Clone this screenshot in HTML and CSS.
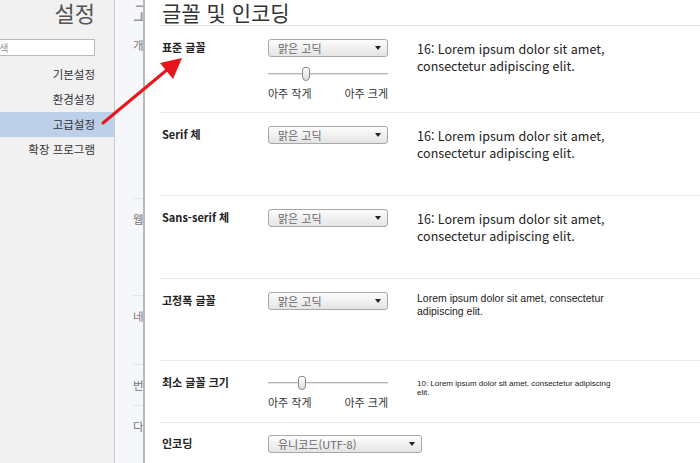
FILE: index.html
```html
<!DOCTYPE html>
<html lang="ko">
<head>
  <meta charset="UTF-8" />
  <meta name="viewport" content="width=device-width, initial-scale=1" />
  <title>설정 - 글꼴 및 인코딩</title>
  <link rel="stylesheet" href="styles.css">
</head>
<body>
  <div class="sidebar">
    <h1 class="side-title">설정</h1>
    <div class="search-wrap"><input class="search" type="text" placeholder="검색" /></div>
    <ul class="nav">
      <li>기본설정</li>
      <li>환경설정</li>
      <li class="active">고급설정</li>
      <li>확장 프로그램</li>
    </ul>
  </div>

  <div class="page">
    <div class="page-title">고급 설정</div>
    <div class="page-section s1">개인 정보</div>
    <div class="page-section s2">웹 콘텐츠</div>
    <div class="page-section s3">네트워크</div>
    <div class="page-section s4">번역</div>
    <div class="page-section s5">다운로드</div>

    <div class="overlay">
      <h2 class="overlay-title">글꼴 및 인코딩</h2>

      <div class="row r1">
        <div class="label">표준 글꼴</div>
        <div class="controls">
          <div class="select">맑은 고딕</div>
          <div class="slider"><span class="thumb" style="left: 34px"></span></div>
          <div class="slider-labels"><span>아주 작게</span><span>아주 크게</span></div>
        </div>
        <div class="sample sample-16">16: Lorem ipsum dolor sit amet, consectetur adipiscing elit.</div>
      </div>

      <div class="row">
        <div class="label">Serif 체</div>
        <div class="controls">
          <div class="select">맑은 고딕</div>
        </div>
        <div class="sample sample-16">16: Lorem ipsum dolor sit amet, consectetur adipiscing elit.</div>
      </div>

      <div class="row">
        <div class="label">Sans-serif 체</div>
        <div class="controls">
          <div class="select">맑은 고딕</div>
        </div>
        <div class="sample sample-16">16: Lorem ipsum dolor sit amet, consectetur adipiscing elit.</div>
      </div>

      <div class="row r4">
        <div class="label">고정폭 글꼴</div>
        <div class="controls">
          <div class="select">맑은 고딕</div>
        </div>
        <div class="sample sample-mono">Lorem ipsum dolor sit amet, consectetur adipiscing elit.</div>
      </div>

      <div class="row r5">
        <div class="label">최소 글꼴 크기</div>
        <div class="controls">
          <div class="slider slider-top"><span class="thumb" style="left: 30px"></span></div>
          <div class="slider-labels"><span>아주 작게</span><span>아주 크게</span></div>
        </div>
        <div class="sample sample-10">10: Lorem ipsum dolor sit amet, consectetur adipiscing elit.</div>
      </div>

      <div class="row r6">
        <div class="label">인코딩</div>
        <div class="controls">
          <div class="select select-wide">유니코드(UTF-8)</div>
        </div>
      </div>
    </div>
  </div>

  <svg class="arrow" width="700" height="463" viewBox="0 0 700 463">
    <line x1="103" y1="123" x2="168" y2="69" stroke="#e8161b" stroke-width="3" stroke-linecap="round" />
    <polygon points="182,58 160,63 173,79" fill="#e8161b" />
  </svg>
</body>
</html>
```

FILE: styles.css
```css
body {
  margin: 0;
  width: 700px;
  height: 463px;
  overflow: hidden;
  display: flex;
  font-family: "Noto Sans CJK KR", "Noto Sans", sans-serif;
  color: #333;
  position: relative;
}
.sidebar {
  width: 114px;
  flex-shrink: 0;
  background: #f1f1f1;
  border-right: 1px solid #c9cbcf;
}
.side-title {
  margin: 0;
  padding-right: 19px;
  text-align: right;
  font-size: 22px;
  line-height: 24px;
  font-weight: normal;
  color: #555;
}
.search-wrap {
  display: flex;
  justify-content: flex-end;
  padding-right: 19px;
  margin-top: 15px;
}
.search {
  width: 110px;
  flex-shrink: 0;
  height: 17px;
  box-sizing: border-box;
  border: 1px solid #b9b9b9;
  padding: 0 4px;
  font-family: inherit;
  font-size: 10px;
  background: #fff;
}
.search::placeholder { color: #999; }
.nav {
  list-style: none;
  margin: 6px 0 0;
  padding: 0;
}
.nav li {
  height: 25px;
  line-height: 25px;
  text-align: right;
  padding-right: 19px;
  font-size: 11.5px;
  color: #333;
}
.nav li.active { background: #bdd0ea; }

.page {
  flex: 1;
  position: relative;
  background: #f5f7fa;
  padding-left: 18px;
}
.page-title {
  font-size: 21px;
  line-height: 24px;
  height: 25px;
  color: #999;
  white-space: nowrap;
}
.page-section {
  font-size: 11.5px;
  color: #777;
  line-height: 14px;
  padding-top: 13px;
  box-sizing: border-box;
  border-top: 1px solid #e2e5ea;
  white-space: nowrap;
}
.s1 { height: 173px; border-top: none; }
.s2 { height: 97px; }
.s3 { height: 69px; }
.s4 { height: 41px; }
.s5 { height: 40px; }

.overlay {
  position: absolute;
  left: 28px;
  top: 0;
  right: 0;
  bottom: 0;
  background: #fff;
  border-left: 2px solid #b7b9bd;
  padding-left: 15px;
}
.overlay-title {
  margin: 0;
  padding-left: 2px;
  font-size: 21px;
  line-height: 24px;
  height: 25px;
  font-weight: normal;
  color: #333;
  border-bottom: 1px solid #e4e4e4;
}
.row {
  display: flex;
  height: 83px;
  box-sizing: border-box;
  padding: 13px 0 0 2px;
  border-bottom: 1px solid #ececec;
}
.r1 { height: 87px; }
.r4 { height: 82px; }
.r5 { height: 62px; }
.r6 { height: 40px; border-bottom: none; padding-top: 12px; }
.label {
  width: 106px;
  flex-shrink: 0;
  font-size: 11px;
  font-weight: bold;
  line-height: 16px;
  color: #222;
}
.controls {
  width: 149px;
  flex-shrink: 0;
}
.select {
  position: relative;
  width: 120px;
  height: 18px;
  box-sizing: border-box;
  border: 1px solid #a9a9a9;
  border-radius: 3px;
  background: linear-gradient(#fdfdfd, #e4e4e4);
  font-size: 11px;
  line-height: 16px;
  color: #666;
  padding-left: 9px;
}
.select::after {
  content: "";
  position: absolute;
  right: 6px;
  top: 6px;
  border-left: 3.5px solid transparent;
  border-right: 3.5px solid transparent;
  border-top: 4px solid #222;
}
.select-wide { width: 154px; }
.slider {
  position: relative;
  width: 120px;
  height: 14px;
  margin-top: 10px;
}
.slider-top { margin-top: 2px; }
.slider::before {
  content: "";
  position: absolute;
  left: 0;
  right: 0;
  top: 6px;
  height: 1px;
  background: #b5b5b5;
  border-bottom: 1px solid #e6e6e6;
}
.thumb {
  position: absolute;
  top: 0;
  width: 8px;
  height: 14px;
  box-sizing: border-box;
  border: 1px solid #8a8a8a;
  border-radius: 3px 3px 4px 4px;
  background: linear-gradient(#ffffff, #dcdcdc);
}
.slider-labels {
  width: 120px;
  display: flex;
  justify-content: space-between;
  margin-top: 5px;
  font-size: 11px;
  line-height: 14px;
  color: #333;
}
.sample {
  width: 200px;
  color: #222;
}
.sample-16 {
  font-size: 12.5px;
  line-height: 17px;
  margin-top: 1px;
}
.sample-mono {
  font-family: "Liberation Sans", Arial, sans-serif;
  font-size: 10.5px;
  line-height: 13px;
}
.sample-10 {
  font-family: "Liberation Sans", Arial, sans-serif;
  font-size: 8px;
  line-height: 9px;
  margin-top: 5px;
}
.arrow {
  position: absolute;
  left: 0;
  top: 0;
  pointer-events: none;
}
```
